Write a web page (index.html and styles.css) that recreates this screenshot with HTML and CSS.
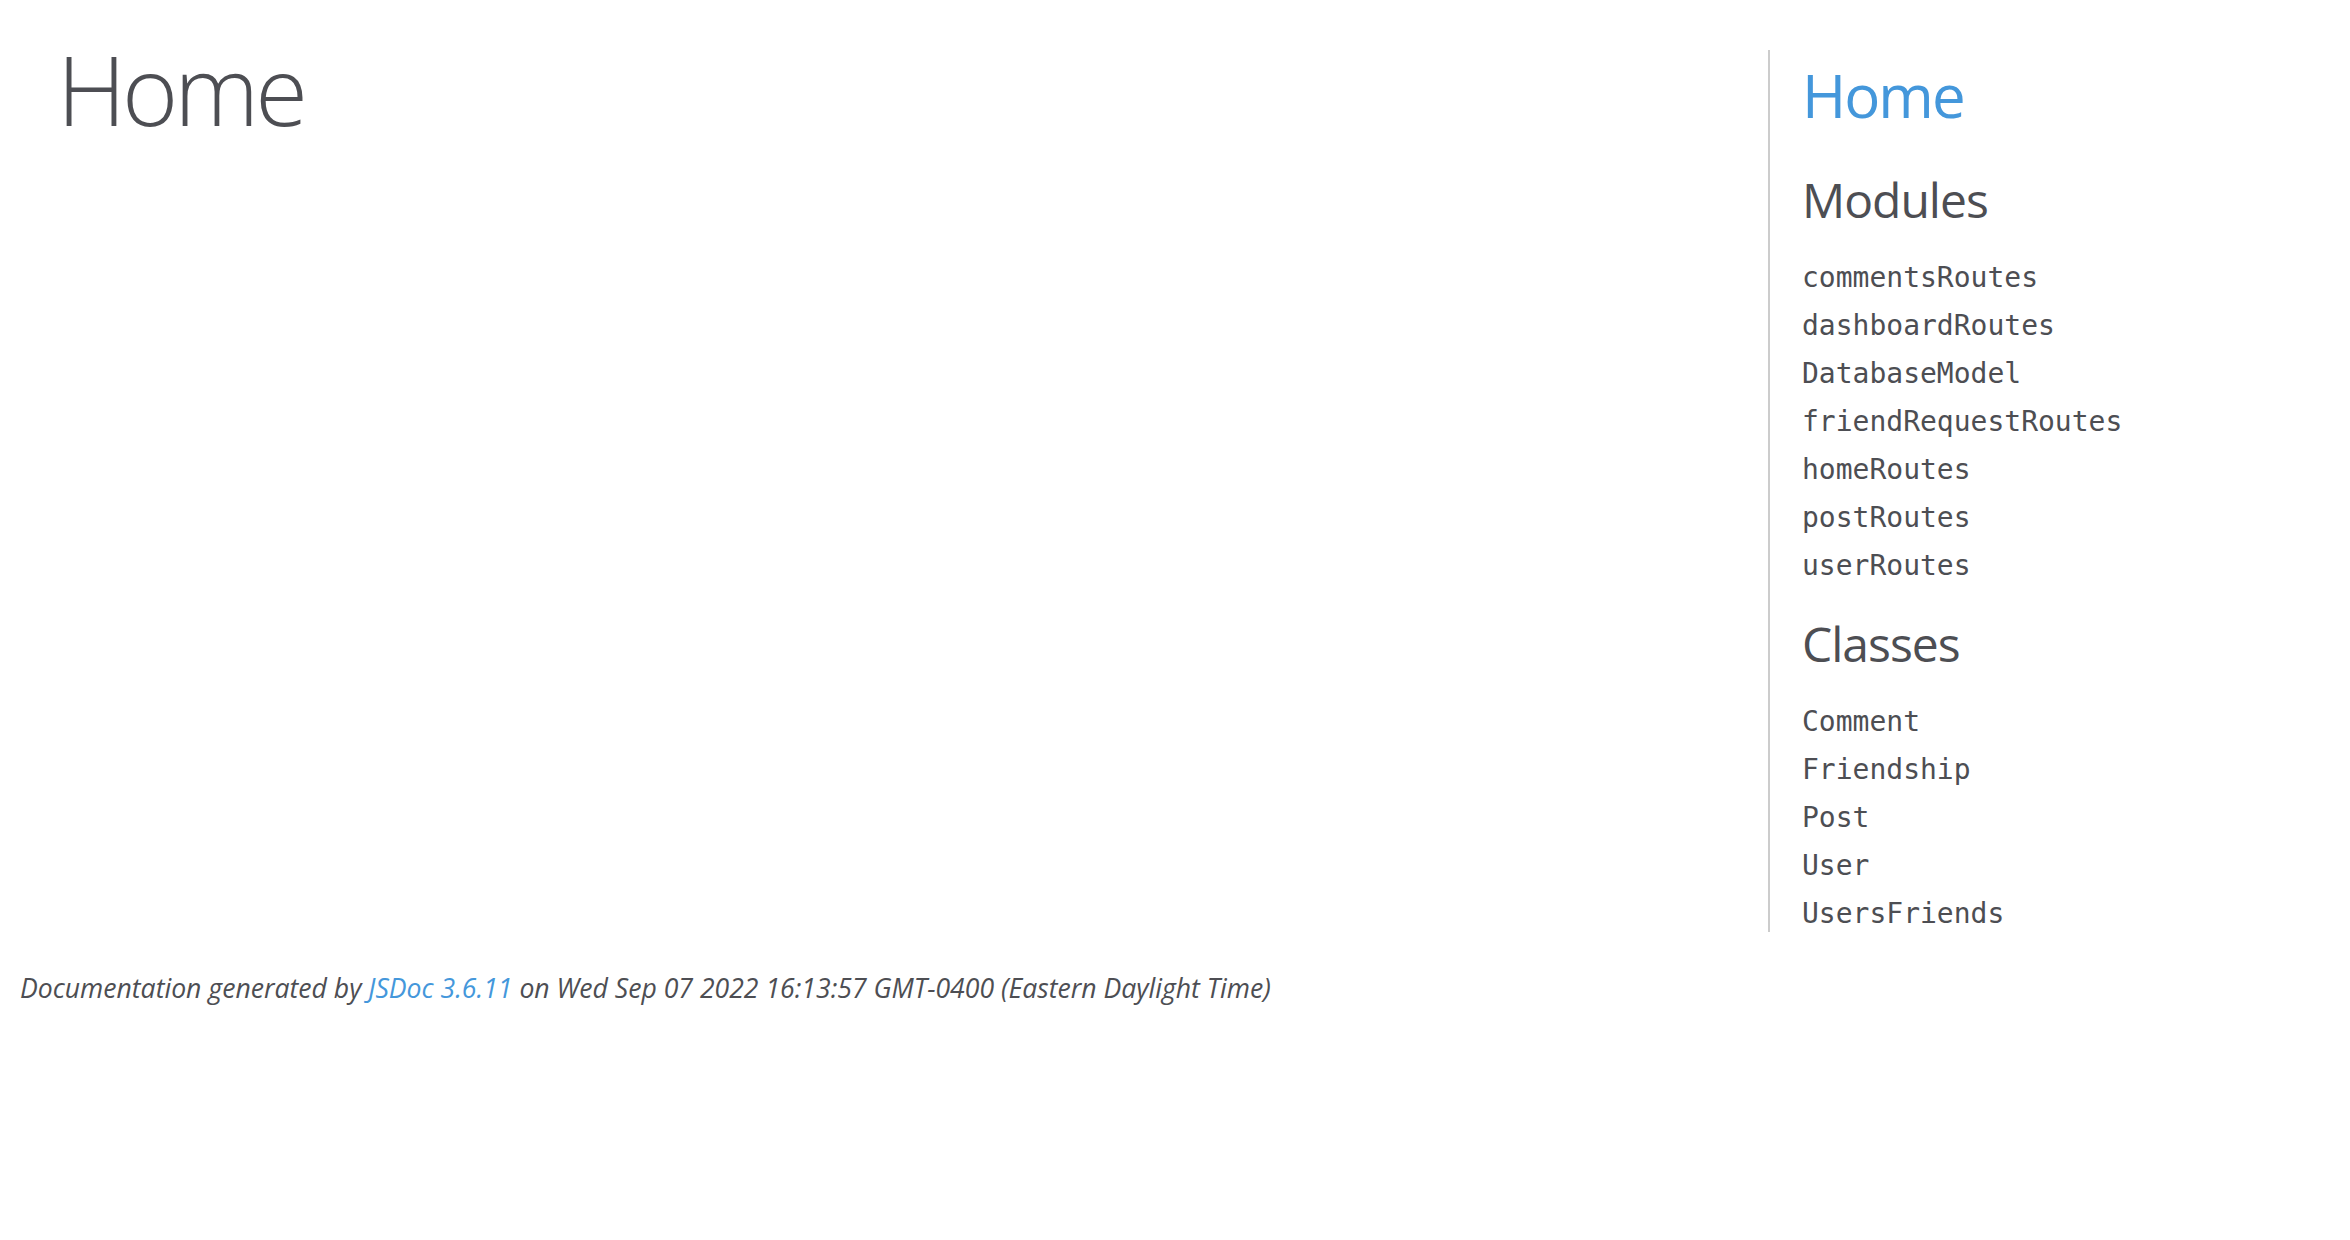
FILE: index.html
```html
<!DOCTYPE html>
<html lang="en">
<head>
<meta charset="utf-8">
<title>JSDoc: Home</title>
<link rel="stylesheet" href="styles.css">
</head>
<body>
<div class="layout">
  <div id="main">
    <h1 class="page-title">Home</h1>
  </div>
  <nav>
    <h2><a href="#">Home</a></h2>
    <h3>Modules</h3>
    <ul>
      <li><a href="#">commentsRoutes</a></li>
      <li><a href="#">dashboardRoutes</a></li>
      <li><a href="#">DatabaseModel</a></li>
      <li><a href="#">friendRequestRoutes</a></li>
      <li><a href="#">homeRoutes</a></li>
      <li><a href="#">postRoutes</a></li>
      <li><a href="#">userRoutes</a></li>
    </ul>
    <h3>Classes</h3>
    <ul>
      <li><a href="#">Comment</a></li>
      <li><a href="#">Friendship</a></li>
      <li><a href="#">Post</a></li>
      <li><a href="#">User</a></li>
      <li><a href="#">UsersFriends</a></li>
    </ul>
  </nav>
</div>
<footer>
  Documentation generated by <a href="#">JSDoc 3.6.11</a> on Wed Sep 07 2022 16:13:57 GMT-0400 (Eastern Daylight Time)
</footer>
</body>
</html>
```

FILE: styles.css
```css
html {
  background-color: #fff;
}

body {
  margin: 0;
  font-family: "Open Sans", "Liberation Sans", sans-serif;
  font-size: 28px;
  line-height: 1.5;
  color: #4d4e53;
  background-color: #fff;
}

a {
  color: #4497db;
  text-decoration: none;
}

.layout {
  display: flex;
  align-items: flex-start;
}

#main {
  flex: 1 1 auto;
}

.page-title {
  font-family: "Open Sans", sans-serif;
  font-size: 96px;
  font-weight: 300;
  letter-spacing: -4px;
  line-height: 144px;
  margin: 17px 0 0 57px;
}

nav {
  flex: 0 0 582px;
  box-sizing: border-box;
  margin-top: 50px;
  border-left: 2px solid #cccccc;
  padding-left: 32px;
}

nav h2 {
  font-size: 60px;
  font-weight: 400;
  letter-spacing: -2px;
  line-height: 90px;
  margin: 0 0 24px;
}

nav h2 a {
  color: #4497db;
}

nav h3 {
  font-size: 48px;
  font-weight: 400;
  letter-spacing: -1px;
  line-height: 72px;
  margin: 24px 0 24px;
}

nav ul {
  list-style: none;
  margin: 0;
  padding: 0;
}

nav li {
  margin-top: 12px;
  font-family: "DejaVu Sans Mono", "Liberation Mono", monospace;
  font-size: 28px;
  line-height: 36px;
  height: 36px;
}

nav li a {
  display: block;
  line-height: 36px;
  color: #4d4e53;
}

footer {
  padding: 0 20px;
  margin-top: 37px;
  font-style: italic;
  font-size: 26.6px;
  line-height: 38px;
}

footer a {
  color: #4497db;
}
```
